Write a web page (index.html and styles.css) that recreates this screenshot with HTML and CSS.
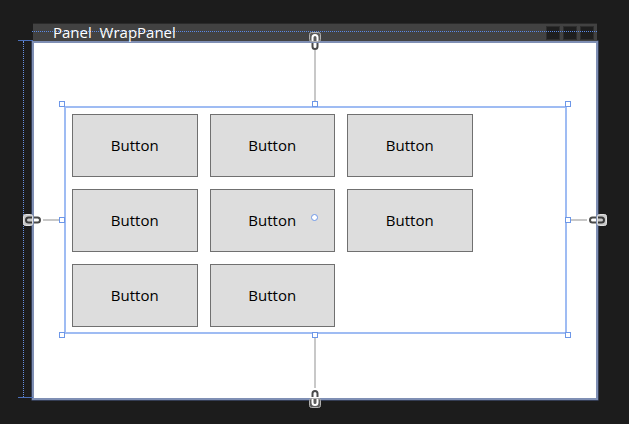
FILE: index.html
```html
<!DOCTYPE html>
<html>
<head>
<meta charset="utf-8">
<link rel="stylesheet" href="styles.css">
</head>
<body>
<div class="stage">
  <div class="ruler"><div class="ruler-line"></div></div>
  <div class="window">
    <div class="titlebar">
      <div class="title-guide"></div>
      <span class="title">Panel&nbsp; WrapPanel</span>
      <div class="controls"><span class="ctl"></span><span class="ctl"></span><span class="ctl"></span></div>
    </div>
    <div class="canvas">
      <div class="panel">
        <div class="btn">Button</div>
        <div class="btn">Button</div>
        <div class="btn">Button</div>
        <div class="btn">Button</div>
        <div class="btn">Button</div>
        <div class="btn">Button</div>
        <div class="btn">Button</div>
        <div class="btn">Button</div>

        <span class="handle h-tl"></span>
        <span class="handle h-tm"></span>
        <span class="handle h-tr"></span>
        <span class="handle h-ml"></span>
        <span class="handle h-mr"></span>
        <span class="handle h-bl"></span>
        <span class="handle h-bm"></span>
        <span class="handle h-br"></span>
        <span class="origin"></span>

        <span class="link-v link-top"></span>
        <span class="link-v link-bottom"></span>
        <span class="link-h link-left"></span>
        <span class="link-h link-right"></span>

        <svg class="anchor anchor-top" width="12" height="20" viewBox="0 0 12 20">
          <rect x="0.5" y="0.5" width="11" height="9" rx="2" fill="#5c5c5c" stroke="#b0b0b0"/>
          <path d="M3.5 9 V5.5 a2.5 2.5 0 0 1 5 0 V9" fill="none" stroke="#ffffff" stroke-width="2"/>
          <path d="M3.5 11 V14.5 a2.5 2.5 0 0 0 5 0 V11" fill="none" stroke="#4a4a4a" stroke-width="2"/>
        </svg>
        <svg class="anchor anchor-bottom" width="12" height="20" viewBox="0 0 12 20">
          <path d="M3.5 9 V5.5 a2.5 2.5 0 0 1 5 0 V9" fill="none" stroke="#4a4a4a" stroke-width="2"/>
          <rect x="0.5" y="10.5" width="11" height="9" rx="2" fill="#5c5c5c" stroke="#b0b0b0"/>
          <path d="M3.5 11 V14.5 a2.5 2.5 0 0 0 5 0 V11" fill="none" stroke="#ffffff" stroke-width="2"/>
        </svg>
        <svg class="anchor anchor-left" width="20" height="12" viewBox="0 0 20 12">
          <rect x="0.5" y="0.5" width="9" height="11" rx="2" fill="#c8c8c8" stroke="#e0e0e0"/>
          <path d="M9 3.5 H5.5 a2.5 2.5 0 0 0 0 5 H9" fill="none" stroke="#3a3a3a" stroke-width="2"/>
          <path d="M11 3.5 H14.5 a2.5 2.5 0 0 1 0 5 H11" fill="none" stroke="#4a4a4a" stroke-width="2"/>
        </svg>
        <svg class="anchor anchor-right" width="20" height="12" viewBox="0 0 20 12">
          <path d="M9 3.5 H5.5 a2.5 2.5 0 0 0 0 5 H9" fill="none" stroke="#4a4a4a" stroke-width="2"/>
          <rect x="10.5" y="0.5" width="9" height="11" rx="2" fill="#c8c8c8" stroke="#e0e0e0"/>
          <path d="M11 3.5 H14.5 a2.5 2.5 0 0 1 0 5 H11" fill="none" stroke="#3a3a3a" stroke-width="2"/>
        </svg>
      </div>
    </div>
  </div>
</div>
</body>
</html>
```

FILE: styles.css
```css
html, body {
  margin: 0;
  padding: 0;
}
body {
  background: #1c1c1c;
  width: 629px;
  height: 424px;
  overflow: hidden;
  font-family: "Open Sans", "Noto Sans", sans-serif;
}
.stage {
  position: relative;
  padding: 23px 0 0 32px;
}
.ruler {
  position: absolute;
  left: 18px;
  top: 40px;
  width: 15px;
  height: 356px;
  border-top: 1px solid #4b6fb8;
  border-bottom: 1px solid #4b6fb8;
}
.ruler-line {
  margin-left: 5px;
  height: 100%;
  border-left: 1px dotted #6690e0;
}
.window {
  width: 566px;
}
.titlebar {
  position: relative;
  margin: 0 1px;
  height: 17px;
  background: #424242;
  border-top: 1px solid #2a2a2a;
  display: flex;
  align-items: center;
}
.title-guide {
  position: absolute;
  left: -1px;
  right: 0;
  top: 7px;
  border-top: 1px dotted #5b8ae6;
}
.title {
  position: relative;
  margin-left: 20px;
  font-size: 15px;
  line-height: 17px;
  color: #ffffff;
}
.controls {
  margin-left: auto;
  margin-right: 3px;
  display: flex;
  gap: 3px;
}
.ctl {
  width: 12px;
  height: 12px;
  background: #1e1e1e;
  border: 1px solid #2e2e2e;
}
.canvas {
  height: 355px;
  background: #ffffff;
  border: 2px solid #7f8fb4;
  box-shadow: 0 0 0 0.5px #4d5f8c;
}
.panel {
  position: relative;
  box-sizing: border-box;
  width: 503px;
  height: 228px;
  margin: 63px 0 0 30px;
  border: 2px solid #9fbcf3;
  display: flex;
  flex-wrap: wrap;
  align-content: flex-start;
}
.btn {
  box-sizing: border-box;
  width: 125.5px;
  height: 63px;
  margin: 6px;
  background: #dddddd;
  border: 1px solid #707070;
  display: flex;
  align-items: center;
  justify-content: center;
  font-size: 15px;
  line-height: 20px;
  padding-bottom: 2px;
  color: #000000;
}
.handle {
  position: absolute;
  box-sizing: border-box;
  width: 6px;
  height: 6px;
  background: #ffffff;
  border: 1px solid #6d97e8;
}
.h-tl { left: -7px; top: -7px; }
.h-tm { left: 246px; top: -7px; }
.h-tr { right: -6px; top: -7px; }
.h-ml { left: -7px; top: 109px; }
.h-mr { right: -6px; top: 109px; }
.h-bl { left: -7px; bottom: -6px; }
.h-bm { left: 246px; bottom: -6px; }
.h-br { right: -6px; bottom: -6px; }
.origin {
  position: absolute;
  box-sizing: border-box;
  left: 245px;
  top: 106px;
  width: 7px;
  height: 7px;
  border-radius: 50%;
  border: 1.5px solid #6d97e8;
  background: #ffffff;
}
.link-v {
  position: absolute;
  left: 248px;
  width: 1.5px;
  background: #c8c8c8;
}
.link-top { top: -58px; height: 51px; }
.link-bottom { top: 230px; height: 50px; }
.link-h {
  position: absolute;
  top: 111px;
  height: 1.5px;
  width: 16px;
  background: #c8c8c8;
}
.link-left { left: -23px; }
.link-right { left: 505px; }
.anchor {
  position: absolute;
  display: block;
}
.anchor-top { left: 243px; top: -76px; }
.anchor-bottom { left: 243px; top: 280px; }
.anchor-left { left: -43px; top: 106px; }
.anchor-right { left: 521px; top: 106px; }
```
